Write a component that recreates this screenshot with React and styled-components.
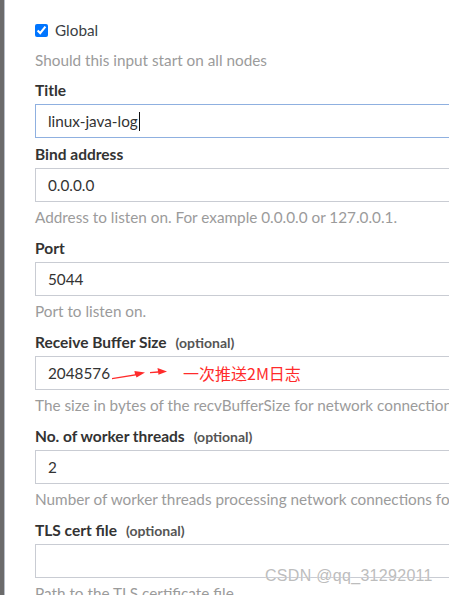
import React from 'react'
import styled, { createGlobalStyle } from 'styled-components'

const GlobalStyle = createGlobalStyle`
body {
  margin: 0;
  overflow: hidden;
  background: #fff;
  font-family: Lato, "Noto Sans", sans-serif;
}
`

const Page = styled.div`
display: flex;
height: 595px;
width: 449px;
overflow: hidden;
position: relative;
`
const Rail = styled.div`
width: 4px;
flex-shrink: 0;
background: #6b6b6b;
border-right: 1px solid #b9bfc9;
`
const Panel = styled.div`
flex: 1;
padding: 20px 0 0 30px;
min-width: 0;
`
const CheckRow = styled.label`
display: flex;
align-items: center;
height: 20px;
font-size: 15.3px;
color: #3b3f45;
`
const Check = styled.input`
width: 13px;
height: 13px;
margin: 0 7px 0 0;
accent-color: #0075ff;
`
const Help = styled.div`
font-size: 15.3px;
line-height: 20px;
height: 20px;
color: #9b9b9b;
white-space: nowrap;
margin: ${p => p.$top ? '10px 0 10px' : '5px 0 5px'};
`
const Field = styled.div`
padding-bottom: 6px;
`
const Label = styled.div`
font-size: 15.5px;
font-weight: 700;
line-height: 20px;
height: 20px;
color: #333;
margin-bottom: 4px;
white-space: nowrap;
`
const Optional = styled.span`
font-size: 14px;
font-weight: 700;
color: #555;
margin-left: 9px;
`
const InputBox = styled.div`
position: relative;
box-sizing: border-box;
width: 440px;
height: 34px;
border: 1px solid ${p => p.$focus ? '#8fb0e0' : '#c9ccd3'};
padding-left: 12px;
display: flex;
align-items: center;
font-size: 15.3px;
color: #333;
`
const Caret = styled.span`
display: inline-block;
width: 1px;
height: 19px;
background: #111;
margin-left: 1px;
`
const Note = styled.div`
position: absolute;
left: 75px;
top: 0;
height: 32px;
display: flex;
align-items: center;
gap: 12px;
`
const NoteText = styled.span`
color: #ff2b2b;
font-size: 16px;
font-family: "Noto Sans CJK SC", sans-serif;
`
const Watermark = styled.div`
position: absolute;
left: 265px;
top: 567px;
font-size: 16px;
font-family: "Liberation Sans", sans-serif;
color: #bdbdbd;
text-shadow: 0 0 1px #fff;
letter-spacing: 0.3px;
`

function Arrows() {
  return (
    <svg width="60" height="18" viewBox="0 0 60 18">
      <path d="M1 14 L24 10.2 L23.4 7 L34 8.4 L25.5 13.6 L24.8 11.6 L1 15.2 Z" fill="#ff2b2b" />
      <path d="M39 8 L47 7.2 L46.5 4 L56 7.4 L47.4 10.8 L47.3 8.7 L39 9.2 Z" fill="#ff2b2b" />
    </svg>
  )
}

const fields = [
  { label: 'Bind address', value: '0.0.0.0', help: 'Address to listen on. For example 0.0.0.0 or 127.0.0.1.' },
  { label: 'Port', value: '5044', help: 'Port to listen on.' },
  { label: 'Receive Buffer Size', optional: true, value: '2048576', note: true, help: 'The size in bytes of the recvBufferSize for network connections to this input.' },
  { label: 'No. of worker threads', optional: true, value: '2', help: 'Number of worker threads processing network connections for this input.' },
  { label: 'TLS cert file', optional: true, value: '', help: 'Path to the TLS certificate file' },
]

export default function App() {
  return (
    <Page>
      <GlobalStyle />
      <Rail />
      <Panel>
        <CheckRow>
          <Check type="checkbox" defaultChecked />
          Global
        </CheckRow>
        <Help $top>Should this input start on all nodes</Help>
        <Field>
          <Label>Title</Label>
          <InputBox $focus>linux-java-log<Caret /></InputBox>
        </Field>
        {fields.map(f => (
          <Field key={f.label}>
            <Label>
              {f.label}
              {f.optional && <Optional>(optional)</Optional>}
            </Label>
            <InputBox>
              {f.value}
              {f.note && (
                <Note>
                  <Arrows />
                  <NoteText>一次推送2M日志</NoteText>
                </Note>
              )}
            </InputBox>
            <Help>{f.help}</Help>
          </Field>
        ))}
      </Panel>
      <Watermark>CSDN @qq_31292011</Watermark>
    </Page>
  )
}
